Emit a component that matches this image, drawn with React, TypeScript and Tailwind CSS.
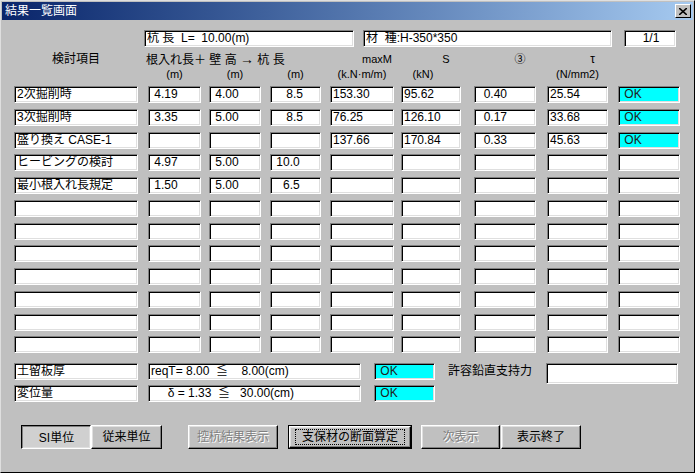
import React from "react";

const cols = [
  "w-[124px]",
  "w-[53px] ml-[10px]",
  "w-[52px] ml-[8px]",
  "w-[51px] ml-[9px]",
  "w-[64px] ml-[9px]",
  "w-[60px] ml-[7px]",
  "w-[62px] ml-[13px]",
  "w-[61px] ml-[11px]",
  "w-[62px] ml-[10px]",
];

const rows: string[][] = [
  ["2次掘削時", " 4.19", " 4.00", "    8.5", "153.30", "95.62", "  0.40", "25.54", " OK"],
  ["3次掘削時", " 3.35", " 5.00", "    8.5", "76.25", "126.10", "  0.17", "33.68", " OK"],
  ["盛り換え CASE-1", "", "", "", "137.66", "170.84", "  0.33", "45.63", " OK"],
  ["ヒービングの検討", " 4.97", " 5.00", " 10.0", "", "", "", "", ""],
  ["最小根入れ長規定", " 1.50", " 5.00", "   6.5", "", "", "", "", ""],
  ["", "", "", "", "", "", "", "", ""],
  ["", "", "", "", "", "", "", "", ""],
  ["", "", "", "", "", "", "", "", ""],
  ["", "", "", "", "", "", "", "", ""],
  ["", "", "", "", "", "", "", "", ""],
  ["", "", "", "", "", "", "", "", ""],
  ["", "", "", "", "", "", "", "", ""],
];

const sunken =
  "border border-t-[#808080] border-l-[#808080] border-b-white border-r-white shadow-[inset_1px_1px_0_#000,inset_-1px_-1px_0_#dfdfdf]";

const Field = ({ text, className = "", cyan = false }: { text: string; className?: string; cyan?: boolean }) => (
  <div
    className={`${sunken} ${cyan ? "bg-[#00ffff] text-[#202020]" : "bg-white"} h-[17px] pl-[2px] pt-[1px] text-[12px] leading-[13px] whitespace-pre overflow-hidden ${className}`}
  >
    {text}
  </div>
);

const Btn = ({
  label,
  className = "",
  disabled = false,
  pressed = false,
  isDefault = false,
}: {
  label: string;
  className?: string;
  disabled?: boolean;
  pressed?: boolean;
  isDefault?: boolean;
}) => {
  const raised =
    "border border-t-white border-l-white border-b-black border-r-black shadow-[inset_-1px_-1px_0_#808080,inset_1px_1px_0_#dfdfdf]";
  const down =
    "border border-t-black border-l-black border-b-white border-r-white shadow-[inset_1px_1px_0_#808080,inset_-1px_-1px_0_#dfdfdf] bg-[#d0d0d0]";
  return (
    <div className={`h-[24px] ${isDefault ? "border border-black" : ""} ${className}`}>
      <div
        className={`h-full flex items-center justify-center text-[12px] ${pressed ? down : raised} ${
          disabled ? "text-[#808080] [text-shadow:1px_1px_0_#fff]" : "text-black"
        }`}
      >
        {isDefault ? (
          <span className="border border-dotted border-black px-[6px] leading-[14px]">{label}</span>
        ) : (
          <span className={pressed ? "pt-[1px] pl-[1px]" : ""}>{label}</span>
        )}
      </div>
    </div>
  );
};

export default function App() {
  return (
    <div
      className="w-[695px] h-[473px] bg-[#c0c0c0] border border-t-[#dfdfdf] border-l-[#dfdfdf] border-b-black border-r-black text-black overflow-hidden"
      style={{ fontFamily: '"Liberation Sans", "Noto Sans CJK JP", sans-serif' }}
    >
      <div className="mx-[1px] mt-[1px] h-[18px] bg-gradient-to-r from-[#0a246a] to-[#a6caf0] flex items-center justify-between pl-[3px] pr-[2px]">
        <span className="text-white text-[12px] leading-[14px]">結果一覧画面</span>
        <div className="w-[16px] h-[14px] bg-[#c0c0c0] border border-t-white border-l-white border-b-black border-r-black flex items-center justify-center">
          <svg width="8" height="7" viewBox="0 0 8 7">
            <path d="M0 0L8 7M8 0L0 7" stroke="#000" strokeWidth="1.6" />
          </svg>
        </div>
      </div>

      <div className="pl-[13px]">
        {/* header boxes */}
        <div className="flex mt-[10px] h-[17px]">
          <Field text="杭 長  L=  10.00(m)" className="w-[210px] ml-[130px]" />
          <Field text="材  種:H-350*350" className="w-[249px] ml-[9px]" />
          <Field text="1/1" className="w-[52px] ml-[12px] text-center pl-0" />
        </div>

        {/* column titles */}
        <div className="flex mt-[5px] h-[14px] text-[12px] leading-[14px]">
          <div className="w-[124px] text-center">検討項目</div>
          <div className="ml-[8px] w-[190px] whitespace-pre">
            根入れ長＋ 壁 高 <span className="text-[14px]">→</span> 杭 長
          </div>
          <div className="ml-[9px] w-[64px] text-center text-[11px]">maxM</div>
          <div className="ml-[7px] w-[60px] text-center text-[11px]">S</div>
          <div className="ml-[13px] w-[62px] text-center text-[11px]">③</div>
          <div className="ml-[11px] w-[61px] text-center">τ</div>
        </div>
        <div className="flex mt-[1px] h-[14px] text-[11px] leading-[14px]">
          <div className={`${cols[0]}`} />
          {["(m)", "(m)", "(m)", "(k.N·m/m)", "(kN)", "", "(N/mm2)"].map((t, i) => (
            <div key={i} className={`${cols[i + 1]} text-center ${i === 4 ? "pr-[16px]" : ""}`}>
              {t}
            </div>
          ))}
        </div>

        {/* data rows */}
        <div className="flex flex-col gap-y-[5.75px] mt-[5px]">
          {rows.map((r, ri) => (
            <div key={ri} className="flex">
              {r.map((c, ci) => (
                <Field key={ci} text={c} className={cols[ci]} cyan={ci === 8 && c.trim() === "OK"} />
              ))}
            </div>
          ))}
        </div>

        {/* bottom checks */}
        <div className="flex items-start mt-[10px]">
          <Field text="土留板厚" className="w-[124px]" />
          <Field text="reqT= 8.00  ≦    8.00(cm)" className="w-[213px] ml-[10px]" />
          <Field text=" OK" cyan className="w-[61px] ml-[13px]" />
          <div className="ml-[13px] text-[12px] leading-[17px] h-[17px]">許容鉛直支持力</div>
          <Field text="" className="w-[132px] ml-[14px] h-[21px]" />
        </div>
        <div className="flex mt-[1px]">
          <Field text="変位量" className="w-[124px]" />
          <Field text="     δ = 1.33  ≦   30.00(cm)" className="w-[213px] ml-[10px]" />
          <Field text=" OK" cyan className="w-[61px] ml-[13px]" />
        </div>

        {/* buttons */}
        <div className="flex mt-[23px]">
          <Btn label="SI単位" pressed className="w-[70px] ml-[7px]" />
          <Btn label="従来単位" className="w-[71px]" />
          <Btn label="控杭結果表示" disabled className="w-[90px] ml-[26px]" />
          <Btn label="支保材の断面算定" isDefault className="w-[124px] ml-[10px]" />
          <Btn label="次表示" disabled className="w-[79px] ml-[9px]" />
          <Btn label="表示終了" className="w-[80px] ml-[1px]" />
        </div>
      </div>
    </div>
  );
}
